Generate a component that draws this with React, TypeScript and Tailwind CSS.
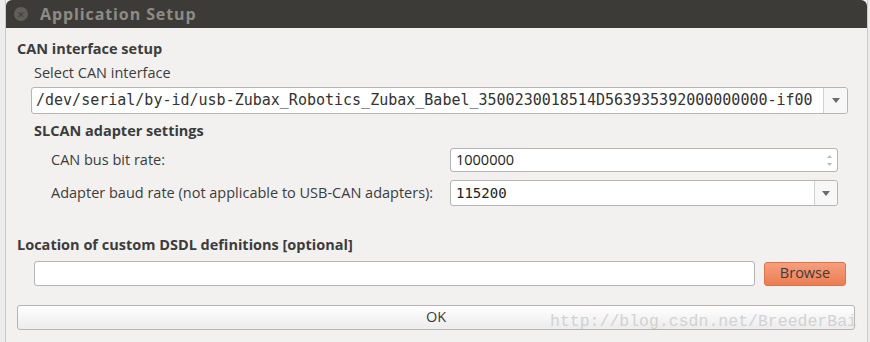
import React from "react"

const ui = { fontFamily: '"Open Sans", "DejaVu Sans", sans-serif' }
const mono = { fontFamily: '"DejaVu Sans Mono", "Liberation Mono", monospace' }

function Arrow() {
  return (
    <svg width="8" height="5" viewBox="0 0 8 5">
      <path d="M0 0 L8 0 L4 5 Z" fill="#6b6b6b" />
    </svg>
  )
}

export default function App() {
  return (
    <div className="w-[870px] h-[342px] overflow-hidden bg-[#ececec] flex" style={ui}>
      <div className="ml-[5px] w-[862px] h-full border-l border-[#c9c9c9] flex flex-col bg-[#f2f1f0] relative">
        {/* Title bar */}
        <div className="h-[28px] shrink-0 bg-[#3c3b37] rounded-t-[6px] flex items-center pl-[8px] gap-[12px]">
          <div className="w-[14px] h-[14px] rounded-full bg-[#5f5e5a] flex items-center justify-center">
            <span className="text-[9px] leading-none text-[#3c3b37] font-bold">✕</span>
          </div>
          <span className="text-[16px] font-bold tracking-[0.9px] text-[#8e8b84]">Application Setup</span>
        </div>

        <div className="flex flex-col text-[14.5px] text-[#3c3c3c] pl-[11px] pr-[11px]">
          <div className="font-bold mt-[12px] leading-[18px]">CAN interface setup</div>
          <div className="pl-[17px] mt-[6px] leading-[18px]">Select CAN interface</div>

          <div className="ml-[14px] mt-[5px] w-[817px] h-[27px] bg-white border border-[#b5b5b5] rounded-[3px] flex items-center">
            <span className="flex-1 pl-[4px] text-[15px] text-[#333] whitespace-nowrap overflow-hidden" style={mono}>
              /dev/serial/by-id/usb-Zubax_Robotics_Zubax_Babel_3500230018514D563935392000000000-if00
            </span>
            <div className="w-[24px] h-full border-l border-[#d0d0d0] flex items-center justify-center bg-[#f7f7f7] rounded-r-[3px]">
              <Arrow />
            </div>
          </div>

          <div className="pl-[17px] font-bold mt-[8px] leading-[18px]">SLCAN adapter settings</div>

          <div className="pl-[34px] mt-[8px] flex items-center h-[24px]">
            <span className="w-[399px]">CAN bus bit rate:</span>
            <div className="w-[388px] h-[24px] bg-white border border-[#b5b5b5] rounded-[3px] flex items-center">
              <span className="flex-1 pl-[5px] text-[14.5px] text-[#222]">1000000</span>
              <div className="w-[15px] h-full flex flex-col items-center justify-center gap-[5px]">
                <svg width="5" height="3" viewBox="0 0 5 3"><path d="M0 3 L5 3 L2.5 0 Z" fill="#bdbdbd" /></svg>
                <svg width="5" height="3" viewBox="0 0 5 3"><path d="M0 0 L5 0 L2.5 3 Z" fill="#bdbdbd" /></svg>
              </div>
            </div>
          </div>

          <div className="pl-[34px] mt-[8px] flex items-center h-[26px]">
            <span className="w-[399px] whitespace-nowrap">Adapter baud rate (not applicable to USB-CAN adapters):</span>
            <div className="w-[388px] h-[26px] bg-white border border-[#b5b5b5] rounded-[3px] flex items-center">
              <span className="flex-1 pl-[5px] text-[14px] text-[#222]" style={mono}>115200</span>
              <div className="w-[23px] h-full border-l border-[#d0d0d0] flex items-center justify-center bg-[#f7f7f7] rounded-r-[3px]">
                <Arrow />
              </div>
            </div>
          </div>

          <div className="font-bold mt-[30px] leading-[18px]">Location of custom DSDL definitions [optional]</div>

          <div className="mt-[7px] flex items-center pl-[17px]">
            <div className="w-[721px] h-[25px] bg-white border border-[#b5b5b5] rounded-[3px]"></div>
            <button className="ml-[9px] w-[82px] h-[24px] rounded-[3px] border border-[#d9754d] bg-gradient-to-b from-[#f59f7c] to-[#ec7d52] text-[14.5px] leading-none text-[#3c3c3c]">
              Browse
            </button>
          </div>

          <button className="mt-[19px] w-[838px] h-[25px] rounded-[3px] border border-[#b5b5b5] bg-gradient-to-b from-white to-[#ececec] text-[14.5px] leading-none text-[#3c3c3c]">
            OK
          </button>
        </div>

        {/* Watermark */}
        <span
          className="absolute left-[544px] top-[312px] text-[16.5px] leading-[20px] text-[#d2d2d2] whitespace-nowrap pointer-events-none"
          style={{ fontFamily: '"Liberation Mono", monospace' }}
        >
          http://blog.csdn.net/BreederBai
        </span>
      </div>
      <div className="w-px h-full bg-[#c9c9c9]"></div>
    </div>
  )
}
